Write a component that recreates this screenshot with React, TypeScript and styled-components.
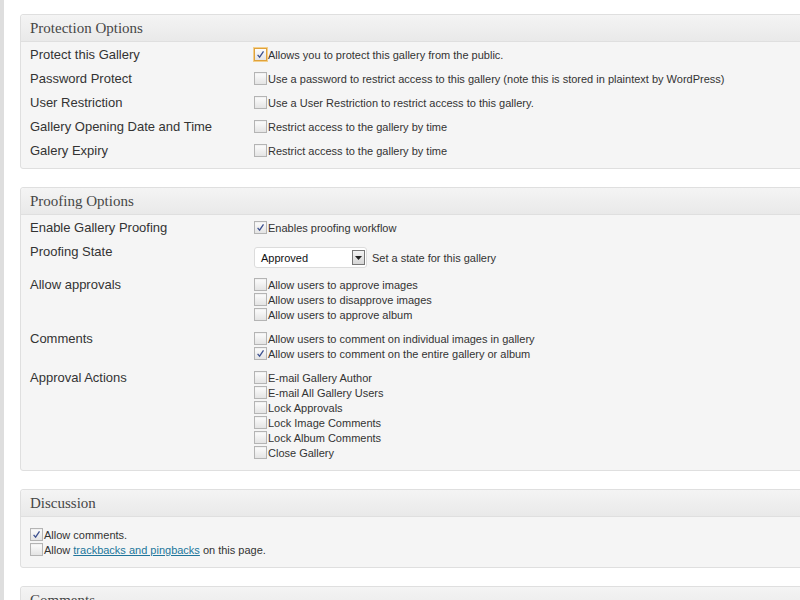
import React from "react";
import styled, { createGlobalStyle } from "styled-components";

const Global = createGlobalStyle`
  html, body { margin: 0; padding: 0; background: #fff; overflow: hidden; }
  body { font-family: "Liberation Sans", Arial, sans-serif; color: #333; }
`;

const Page = styled.div`
  border-left: 4px solid #dedede;
  min-height: 600px;
  box-sizing: border-box;
  padding: 14px 0 0 16px;
  width: 840px;
`;

const Panel = styled.section`
  border: 1px solid #dfdfdf;
  border-radius: 3px;
  background: #f5f5f5;
  margin-bottom: 18px;
  width: 820px;
  box-shadow: inset 0 1px 0 #fff;
`;

const PanelHeader = styled.h3`
  margin: 0;
  height: 26px;
  line-height: 26px;
  padding: 0 9px;
  font-family: "Liberation Serif", "Times New Roman", serif;
  font-weight: normal;
  font-size: 15px;
  color: #464646;
  background: linear-gradient(#f4f4f4, #e9e9e9);
  border-bottom: 1px solid #dfdfdf;
  border-radius: 3px 3px 0 0;
`;

const PanelBody = styled.div<{ $top?: number }>`
  padding: ${(p) => p.$top ?? 5}px 9px 10px;
  display: flex;
  flex-direction: column;
  gap: 9px;
`;

const Row = styled.div`
  display: grid;
  grid-template-columns: 224px 1fr;
  align-items: start;
`;

const Label = styled.div`
  font-size: 13px;
  line-height: 15px;
  color: #333;
`;

const List = styled.div`
  display: flex;
  flex-direction: column;
`;

const Option = styled.label`
  display: flex;
  align-items: center;
  height: 15px;
  font-size: 11px;
  color: #333;
  white-space: nowrap;
`;

const Box = styled.span<{ $focus?: boolean }>`
  width: 11px;
  height: 11px;
  border: 1px solid ${(p) => (p.$focus ? "#e0a23a" : "#b4b4b4")};
  box-shadow: ${(p) => (p.$focus ? "0 0 0 1px #f3cf8c" : "inset 0 1px 1px rgba(0,0,0,0.05)")};
  background: linear-gradient(#fdfdfd, #e4e4e4);
  margin-right: 1px;
  flex: none;
  display: flex;
  align-items: center;
  justify-content: center;
`;

const Link = styled.a`
  color: #21759b;
  text-decoration: underline;
  margin: 0 3px;
`;

const Check = ({ checked, focus }: { checked?: boolean; focus?: boolean }) => (
  <Box $focus={focus}>
    {checked && (
      <svg width="9" height="9" viewBox="0 0 9 9">
        <path d="M1.6 4.9 L3.6 7.2 L7.5 1.3" fill="none" stroke="#3d5190" strokeWidth="1.3" />
      </svg>
    )}
  </Box>
);

const Item = ({ text, checked, focus }: { text: React.ReactNode; checked?: boolean; focus?: boolean }) => (
  <Option>
    <Check checked={checked} focus={focus} />
    <span>{text}</span>
  </Option>
);

const SelectRow = styled.div`
  display: flex;
  align-items: center;
  gap: 5px;
  padding-top: 3px;
  font-size: 11px;
`;

const Select = styled.div`
  height: 19px;
  border: 1px solid #dcdcdc;
  border-radius: 3px;
  background: #fff;
  display: flex;
  align-items: center;
  justify-content: space-between;
  padding: 0 1px 0 6px;
  box-sizing: content-box;
  width: 104px;
  font-size: 11px;
  color: #111;
`;

const Arrow = styled.span`
  width: 13px;
  height: 15px;
  border: 1px solid #777;
  background: linear-gradient(#f3f3f3, #d6d6d6);
  display: flex;
  align-items: center;
  justify-content: center;
  box-sizing: border-box;
`;

export default function App() {
  return (
    <>
      <Global />
      <Page>
        <Panel>
          <PanelHeader>Protection Options</PanelHeader>
          <PanelBody>
            <Row>
              <Label>Protect this Gallery</Label>
              <Item checked focus text="Allows you to protect this gallery from the public." />
            </Row>
            <Row>
              <Label>Password Protect</Label>
              <Item text="Use a password to restrict access to this gallery (note this is stored in plaintext by WordPress)" />
            </Row>
            <Row>
              <Label>User Restriction</Label>
              <Item text="Use a User Restriction to restrict access to this gallery." />
            </Row>
            <Row>
              <Label>Gallery Opening Date and Time</Label>
              <Item text="Restrict access to the gallery by time" />
            </Row>
            <Row>
              <Label>Galery Expiry</Label>
              <Item text="Restrict access to the gallery by time" />
            </Row>
          </PanelBody>
        </Panel>

        <Panel>
          <PanelHeader>Proofing Options</PanelHeader>
          <PanelBody>
            <Row>
              <Label>Enable Gallery Proofing</Label>
              <Item checked text="Enables proofing workflow" />
            </Row>
            <Row>
              <Label>Proofing State</Label>
              <SelectRow>
                <Select>
                  <span>Approved</span>
                  <Arrow>
                    <svg width="7" height="4" viewBox="0 0 7 4">
                      <path d="M0 0 H7 L3.5 4 Z" fill="#222" />
                    </svg>
                  </Arrow>
                </Select>
                <span>Set a state for this gallery</span>
              </SelectRow>
            </Row>
            <Row>
              <Label>Allow approvals</Label>
              <List>
                <Item text="Allow users to approve images" />
                <Item text="Allow users to disapprove images" />
                <Item text="Allow users to approve album" />
              </List>
            </Row>
            <Row>
              <Label>Comments</Label>
              <List>
                <Item text="Allow users to comment on individual images in gallery" />
                <Item checked text="Allow users to comment on the entire gallery or album" />
              </List>
            </Row>
            <Row>
              <Label>Approval Actions</Label>
              <List>
                <Item text="E-mail Gallery Author" />
                <Item text="E-mail All Gallery Users" />
                <Item text="Lock Approvals" />
                <Item text="Lock Image Comments" />
                <Item text="Lock Album Comments" />
                <Item text="Close Gallery" />
              </List>
            </Row>
          </PanelBody>
        </Panel>

        <Panel>
          <PanelHeader>Discussion</PanelHeader>
          <PanelBody $top={10}>
            <List>
              <Item checked text="Allow comments." />
              <Item
                text={
                  <>
                    Allow<Link href="#">trackbacks and pingbacks</Link>on this page.
                  </>
                }
              />
            </List>
          </PanelBody>
        </Panel>

        <Panel>
          <PanelHeader>Comments</PanelHeader>
          <PanelBody>
            <Label>&nbsp;</Label>
          </PanelBody>
        </Panel>
      </Page>
    </>
  );
}
